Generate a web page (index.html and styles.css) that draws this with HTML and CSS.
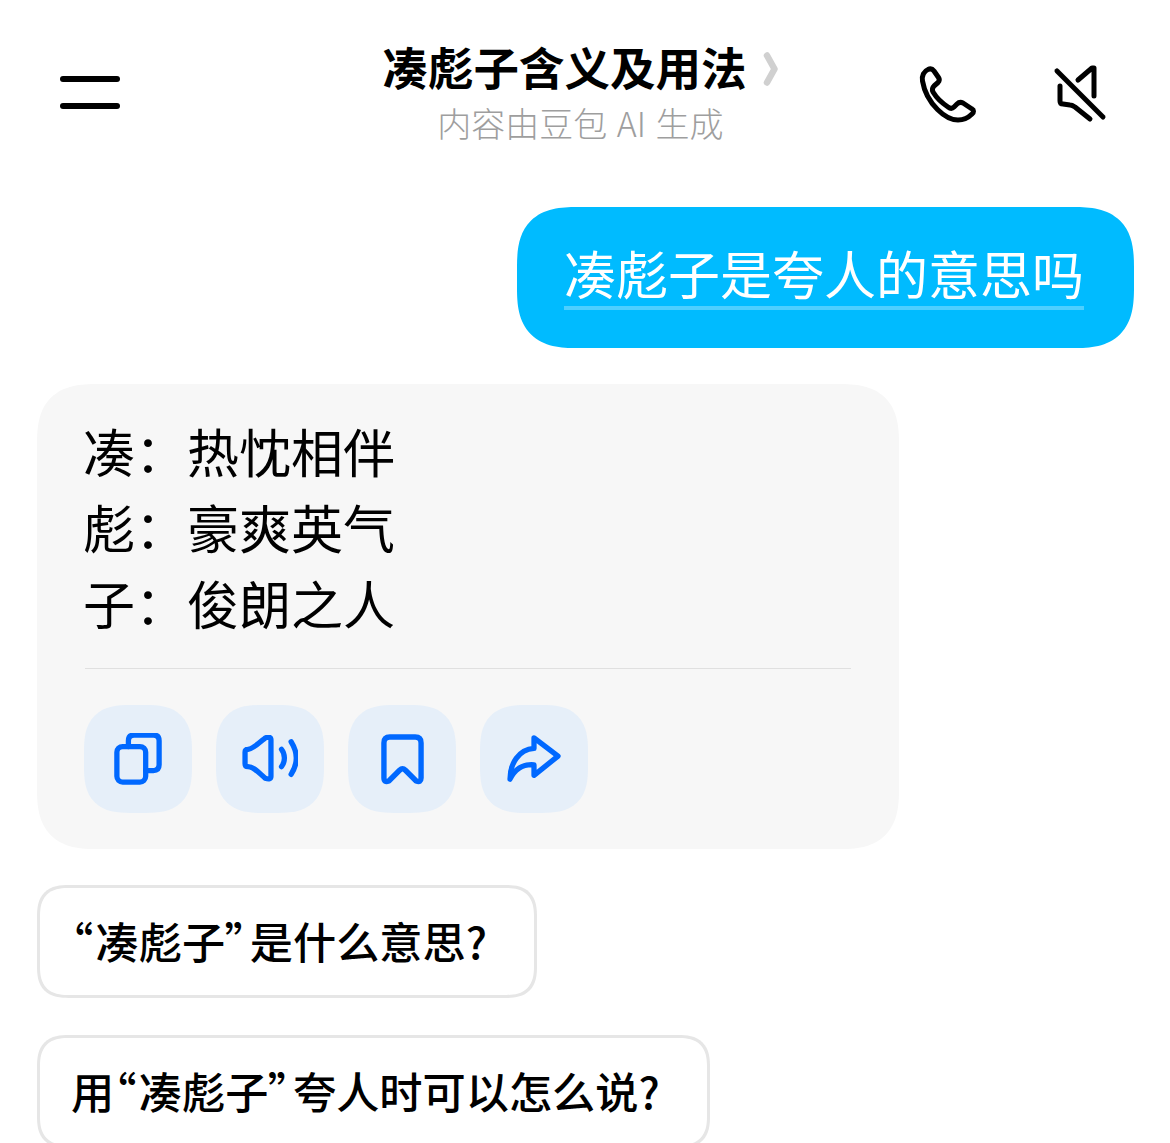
FILE: index.html
```html
<!DOCTYPE html>
<html lang="zh-CN">

<head>
    <meta charset="UTF-8">
    <meta name="viewport" content="width=device-width, initial-scale=1.0">
    <title>凑彪子含义及用法</title>
    <link rel="stylesheet" href="styles.css">
</head>

<body>
    <header class="topbar">
        <div class="menu-btn"><span></span><span></span></div>
        <div class="topbar-title">
            <div class="title-row">
                <h1>凑彪子含义及用法</h1>
                <svg class="chevron" width="16" height="34" viewBox="0 0 16 34" fill="none">
                    <path d="M4 3.5 L11.5 17 L4 30.5" stroke="#d0d0d0" stroke-width="6.5" stroke-linecap="round" stroke-linejoin="round" />
                </svg>
            </div>
            <p>内容由豆包 AI 生成</p>
        </div>
        <div class="topbar-actions">
            <svg width="60" height="60" viewBox="0 0 60 60" fill="none" stroke="#000" stroke-width="5" stroke-linecap="round" stroke-linejoin="round">
                <path d="M10 6.5 C6 8 3.5 13 4.5 18 C6 27 11 38 19.5 46.5 C26 53 33 57 40 57 C46 57 50 55 54 51 C56 49 56 47 54 46 L45 40 C43 39 41 39 39 41 L36 44 C34 46 32 45.5 30 44 C24 40 18 34 15 29 C14 27 14 25 16 23 L20 19.5 C21.5 18 21.5 16 20.5 14.5 L16 8 C14.5 6 12 5.5 10 6.5 Z" />
            </svg>
            <svg width="56" height="60" viewBox="0 0 56 60" fill="none" stroke="#000" stroke-width="5" stroke-linecap="round" stroke-linejoin="round">
                <path d="M4 8 L50 54" />
                <path d="M25 17 L39 5 L41 5 L41 33" />
                <path d="M7 23 L7 38 Q7 41 10 41 L17 42 Q19 42 22 44 L37 56" />
            </svg>
        </div>
    </header>

    <main class="chat">
        <div class="bubble-user"><span>凑彪子是夸人的意思吗</span></div>

        <section class="bubble-bot">
            <div class="answer">
                <p>凑：<span>热忱相伴</span></p>
                <p>彪：<span>豪爽英气</span></p>
                <p>子：<span>俊朗之人</span></p>
            </div>
            <div class="divider"></div>
            <div class="tools">
                <button>
                    <svg width="48" height="52" viewBox="0 0 50 54" fill="none" stroke="#0068ff" stroke-width="5.5" stroke-linecap="round" stroke-linejoin="round">
                        <rect x="3" y="14" width="30" height="37" rx="6" />
                        <path d="M15 14 L15 8 Q15 2 21 2 L41 2 Q47 2 47 8 L47 33 Q47 39 41 39 L33 39" />
                    </svg>
                </button>
                <button>
                    <svg width="56" height="48" viewBox="0 0 58 50" fill="none" stroke="#0068ff" stroke-width="5.5" stroke-linecap="round" stroke-linejoin="round">
                        <path d="M3 18 Q3 15 6 15 C12 14 17 9 24 3 Q30 1 30 5 L30 43 Q30 47 24 45 C17 39 12 33 6 33 Q3 33 3 30 Z" />
                        <path d="M41 15 C45 20 45 28 41 33" />
                        <path d="M51 7 C58 18 58 30 51 41" />
                    </svg>
                </button>
                <button>
                    <svg width="43" height="51" viewBox="0 0 44 52" fill="none" stroke="#0068ff" stroke-width="5.5" stroke-linecap="round" stroke-linejoin="round">
                        <path d="M3 9 Q3 3 9 3 L35 3 Q41 3 41 9 L41 45 Q41 50 36 48 L25 37 Q22 34 19 37 L8 48 Q3 50 3 45 Z" />
                    </svg>
                </button>
                <button>
                    <svg width="54" height="48" viewBox="0 0 56 50" fill="none" stroke="#0068ff" stroke-width="5.5" stroke-linecap="round" stroke-linejoin="round">
                        <path d="M28 3 L53 22 L28 42 L28 31 C16 30 8 36 3 46 C3 30 12 15 28 14 Z" />
                    </svg>
                </button>
            </div>
        </section>

        <div class="chip"><span class="quote">“</span>凑彪子<span class="quote">”</span>是什么意思?</div>
        <div class="chip">用<span class="quote">“</span>凑彪子<span class="quote">”</span>夸人时可以怎么说?</div>
    </main>
</body>

</html>
```

FILE: styles.css
```css
* {
    box-sizing: border-box;
}

html,
body {
    height: 100%;
}

body {
    margin: 0;
    background-color: #fff;
    color: #000;
    font-family: "Noto Sans CJK SC", "Noto Sans", sans-serif;
    overflow: hidden;
}

.topbar {
    display: grid;
    grid-template-columns: 1fr auto 1fr;
    align-items: center;
    height: 207px;
    padding: 0 61px 23px 60px;
}

.menu-btn {
    display: flex;
    flex-direction: column;
    gap: 21px;
    width: 60px;
    margin-top: 1px;
}

.menu-btn span {
    height: 6px;
    border-radius: 3px;
    background-color: #000;
}

.topbar-title {
    margin-right: 8px;
    text-align: center;
}

.title-row {
    display: flex;
    align-items: center;
    gap: 16px;
}

.title-row h1 {
    margin: 0;
    font-size: 45.5px;
    line-height: 60px;
    font-weight: 700;
}

.chevron {
    margin-top: 6px;
}

.topbar-title p {
    margin: 2px 0 0;
    font-size: 34px;
    line-height: 50px;
    font-weight: 300;
    word-spacing: 2px;
    color: #9e9e9e;
}

.topbar-actions {
    display: flex;
    justify-content: flex-end;
    align-items: center;
    gap: 75px;
    margin-top: 1px;
}

.chat {
    display: flex;
    flex-direction: column;
    align-items: flex-start;
    padding: 0 36px 0 37px;
}

.bubble-user {
    align-self: flex-end;
    padding: 32px 50px 0 47px;
    height: 141px;
    border-radius: 60px;
    corner-shape: superellipse(1.4);
    background-color: #00bbff;
    color: #fff;
    font-size: 52px;
    line-height: 67px;
    font-weight: 400;
}

.bubble-user span {
    display: block;
    border-bottom: 4px solid rgba(255, 255, 255, 0.3);
}

.bubble-bot {
    width: 862px;
    height: 465px;
    margin-top: 36px;
    padding: 29px 48px 0;
    border-radius: 60px;
    corner-shape: superellipse(1.4);
    background-color: #f7f7f7;
}

.answer {
    margin-left: -2px;
}

.answer p {
    margin: 0;
    font-size: 52px;
    line-height: 76px;
    font-weight: 400;
}

.divider {
    height: 1px;
    margin-top: 27px;
    background-color: #e0e0e0;
}

.tools {
    display: flex;
    gap: 24px;
    margin: 36px 0 0 -1px;
}

.tools button {
    display: flex;
    align-items: center;
    justify-content: center;
    width: 108px;
    height: 108px;
    padding: 0;
    border: none;
    border-radius: 46px;
    corner-shape: superellipse(1.4);
    background-color: #e6eff9;
}

.chip {
    height: 113px;
    margin-top: 36px;
    padding: 0 47px 0 31px;
    border: 3px solid #e6e6e6;
    border-radius: 32px;
    corner-shape: superellipse(1.4);
    font-size: 43.2px;
    line-height: 105px;
    font-weight: 500;
}

.chip + .chip {
    margin-top: 37px;
}

/* CJK quotes take a full em by default, use the proportional form */
.quote {
    font-feature-settings: "palt";
    letter-spacing: 3px;
}
```
